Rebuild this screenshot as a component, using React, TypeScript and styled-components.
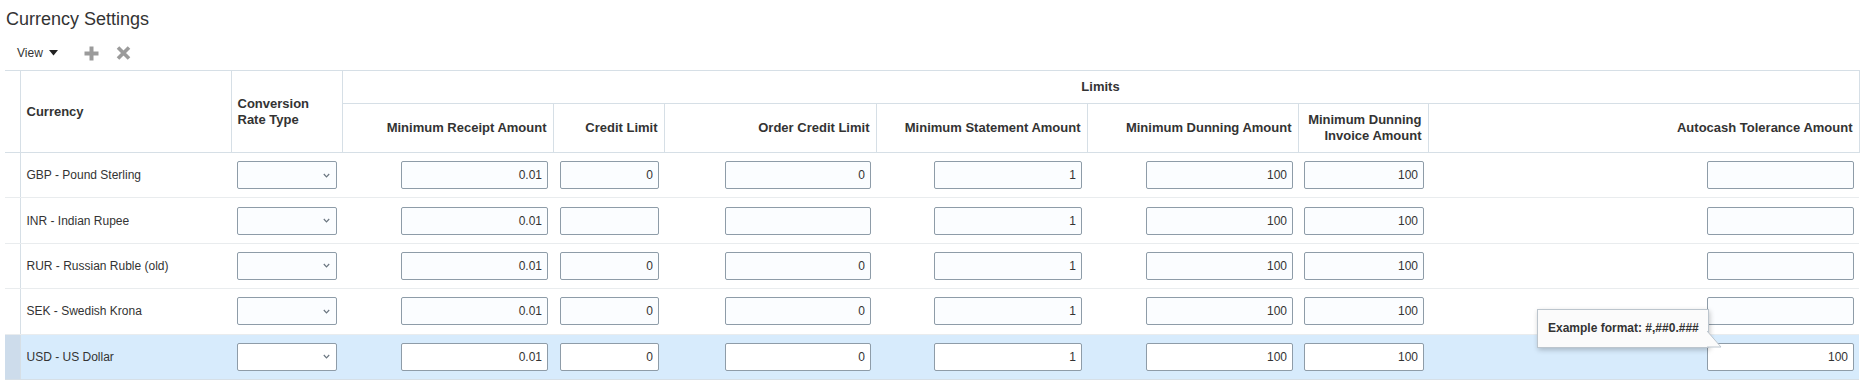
import React from "react";
import styled, { createGlobalStyle } from "styled-components";

const GlobalStyle = createGlobalStyle`
  body {
    margin: 0;
    background: #ffffff;
    color: #333333;
    font-family: "Liberation Sans", Arial, sans-serif;
  }
`;

type LimitColumn = {
  key: string;
  label: string;
  width: number;
  input: number;
};

type CurrencyRow = {
  name: string;
  values: string[];
  selected?: boolean;
};

const limitColumns: LimitColumn[] = [
  { key: "receipt", label: "Minimum Receipt Amount", width: 211, input: 147 },
  { key: "credit", label: "Credit Limit", width: 111, input: 99 },
  { key: "order", label: "Order Credit Limit", width: 212, input: 146 },
  { key: "statement", label: "Minimum Statement Amount", width: 211, input: 148 },
  { key: "dunning", label: "Minimum Dunning Amount", width: 211, input: 147 },
  { key: "invoice", label: "Minimum Dunning Invoice Amount", width: 130, input: 120 },
  { key: "autocash", label: "Autocash Tolerance Amount", width: 431, input: 147 },
];

const rows: CurrencyRow[] = [
  { name: "GBP - Pound Sterling", values: ["0.01", "0", "0", "1", "100", "100", ""] },
  { name: "INR - Indian Rupee", values: ["0.01", "", "", "1", "100", "100", ""] },
  { name: "RUR - Russian Ruble (old)", values: ["0.01", "0", "0", "1", "100", "100", ""] },
  { name: "SEK - Swedish Krona", values: ["0.01", "0", "0", "1", "100", "100", ""] },
  { name: "USD - US Dollar", values: ["0.01", "0", "0", "1", "100", "100", "100"], selected: true },
];

const Page = styled.div`
  padding: 0 10px 0 5px;
`;

const Title = styled.h1`
  margin: 0;
  padding: 8px 0 0 1px;
  font-size: 18px;
  line-height: 22px;
  font-weight: normal;
  color: #333333;
`;

const Toolbar = styled.div`
  display: flex;
  align-items: center;
  height: 22px;
  margin-top: 12px;
  padding-left: 12px;
`;

const ViewMenu = styled.div`
  display: flex;
  align-items: center;
  gap: 6px;
  font-size: 12px;
  color: #333333;
  margin-right: 26px;
`;

const ToolButton = styled.span`
  display: flex;
  align-items: center;
  margin-right: 17px;
`;

const Table = styled.table`
  margin-top: 6px;
  border-collapse: collapse;
  table-layout: fixed;
  width: 1854px;
`;

const HeadCell = styled.th<{ $align?: "left" | "right" | "center"; $h?: number }>`
  border: 1px solid #d6dfe6;
  padding: 0 6px;
  height: ${(p) => p.$h ?? 32}px;
  font-size: 13px;
  line-height: 16px;
  font-weight: bold;
  color: #333333;
  text-align: ${(p) => p.$align ?? "right"};
  vertical-align: middle;
`;

const CornerCell = styled.th`
  border-top: 1px solid #d6dfe6;
  border-bottom: 1px solid #d6dfe6;
  border-right: 1px solid #d6dfe6;
  padding: 0;
`;

const BodyRow = styled.tr<{ $selected?: boolean }>`
  background: ${(p) => (p.$selected ? "#d7ebfc" : "#ffffff")};
  & > td {
    border-bottom: 1px solid ${(p) => (p.$selected ? "#d6dfe6" : "#e9ecee")};
  }
`;

const RowHeader = styled.td<{ $selected?: boolean }>`
  padding: 0;
  border-right: 1px solid #d6dfe6;
  background: ${(p) => (p.$selected ? "#cddceb" : "transparent")};
`;

const Cell = styled.td<{ $pos?: boolean }>`
  height: 44.4px;
  padding: 0 5px 0 6px;
  font-size: 12px;
  color: #333333;
  vertical-align: middle;
  position: ${(p) => (p.$pos ? "relative" : "static")};
`;

const NumberInput = styled.input<{ $w: number; $selected?: boolean }>`
  display: block;
  margin-left: auto;
  box-sizing: border-box;
  width: ${(p) => p.$w}px;
  height: 28px;
  padding: 0 5px;
  border: 1px solid #8e9ca8;
  border-radius: 2px;
  background: ${(p) => (p.$selected ? "#ffffff" : "#fbfdff")};
  font-family: "Liberation Sans", Arial, sans-serif;
  font-size: 12px;
  color: #333333;
  text-align: right;
  outline: none;
`;

const SelectBox = styled.div<{ $selected?: boolean }>`
  display: flex;
  align-items: center;
  justify-content: flex-end;
  box-sizing: border-box;
  width: 100px;
  height: 28px;
  padding-right: 6px;
  border: 1px solid #8e9ca8;
  border-radius: 2px;
  background: ${(p) => (p.$selected ? "#ffffff" : "#fbfdff")};
`;

const Tooltip = styled.div`
  position: absolute;
  left: 109px;
  top: -26px;
  z-index: 2;
  box-sizing: border-box;
  width: 172px;
  height: 39px;
  padding-left: 10px;
  display: flex;
  align-items: center;
  background: #fbfbfb;
  border: 1px solid #bcc5cd;
  box-shadow: 1px 2px 5px rgba(0, 0, 0, 0.22);
  font-size: 12px;
  font-weight: bold;
  color: #333333;
  white-space: nowrap;
`;

const TooltipPointer = styled.svg`
  position: absolute;
  right: -14px;
  bottom: -1px;
`;

const Chevron = () => (
  <svg width="7" height="5" viewBox="0 0 7 5">
    <path d="M0.8 1 L3.5 3.8 L6.2 1" fill="none" stroke="#6b7680" strokeWidth="1.2" />
  </svg>
);

export default function App() {
  return (
    <Page>
      <GlobalStyle />
      <Title>Currency Settings</Title>
      <Toolbar>
        <ViewMenu>
          View
          <svg width="9" height="6" viewBox="0 0 9 6">
            <polygon points="0,0 9,0 4.5,5.5" fill="#222" />
          </svg>
        </ViewMenu>
        <ToolButton>
          <svg width="15" height="15" viewBox="0 0 15 15">
            <rect x="5.5" y="0.5" width="4" height="14" fill="#9b9b9b" />
            <rect x="0.5" y="5.5" width="14" height="4" fill="#9b9b9b" />
          </svg>
        </ToolButton>
        <ToolButton>
          <svg width="15" height="14" viewBox="0 0 15 14">
            <path d="M2 1.5 L13 12.5 M13 1.5 L2 12.5" stroke="#9b9b9b" strokeWidth="3.6" />
          </svg>
        </ToolButton>
      </Toolbar>

      <Table>
        <colgroup>
          <col style={{ width: 15 }} />
          <col style={{ width: 211 }} />
          <col style={{ width: 111 }} />
          {limitColumns.map((c) => (
            <col key={c.key} style={{ width: c.width }} />
          ))}
        </colgroup>
        <thead>
          <tr>
            <CornerCell rowSpan={2} />
            <HeadCell rowSpan={2} $align="left">
              Currency
            </HeadCell>
            <HeadCell rowSpan={2} $align="left">
              Conversion Rate Type
            </HeadCell>
            <HeadCell colSpan={limitColumns.length} $align="center">
              Limits
            </HeadCell>
          </tr>
          <tr>
            {limitColumns.map((c) => (
              <HeadCell key={c.key} $h={48}>
                {c.label}
              </HeadCell>
            ))}
          </tr>
        </thead>
        <tbody>
          {rows.map((row) => (
            <BodyRow key={row.name} $selected={row.selected}>
              <RowHeader $selected={row.selected} />
              <Cell>{row.name}</Cell>
              <Cell>
                <SelectBox $selected={row.selected}>
                  <Chevron />
                </SelectBox>
              </Cell>
              {limitColumns.map((c, i) => (
                <Cell key={c.key} $pos={row.selected && c.key === "autocash"}>
                  {row.selected && c.key === "autocash" && (
                    <Tooltip>
                      Example format: #,##0.###
                      <TooltipPointer width="15" height="18" viewBox="0 0 15 18">
                        <polygon points="0,1 14,17 0,17" fill="#fbfbfb" />
                        <polyline points="0,1 14,17 0,17" fill="none" stroke="#bcc5cd" />
                      </TooltipPointer>
                    </Tooltip>
                  )}
                  <NumberInput $w={c.input} $selected={row.selected} value={row.values[i]} readOnly />
                </Cell>
              ))}
            </BodyRow>
          ))}
        </tbody>
      </Table>
    </Page>
  );
}
